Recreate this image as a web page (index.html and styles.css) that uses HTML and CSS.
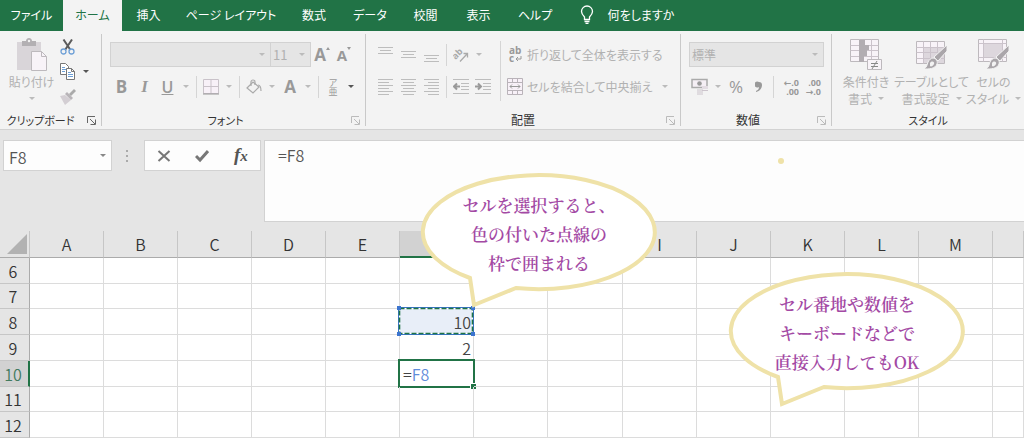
FILE: index.html
```html
<!DOCTYPE html>
<html lang="ja">
<head>
<meta charset="utf-8">
<meta name="viewport" content="width=device-width, initial-scale=1">
<title>F8</title>
<link rel="stylesheet" href="styles.css">
</head>
<body>
<div class="workbook">
  <nav class="tabs">
    <button class="tab">ファイル</button>
    <button class="tab tab-active">ホーム</button>
    <button class="tab">挿入</button>
    <button class="tab">ページ レイアウト</button>
    <button class="tab">数式</button>
    <button class="tab">データ</button>
    <button class="tab">校閲</button>
    <button class="tab">表示</button>
    <button class="tab">ヘルプ</button>
    <button class="tab tell-me">
      <svg width="14" height="20" viewBox="0 0 14 20" fill="none" stroke="#fff" stroke-width="1.3"><path d="M4.5 14.5V12C3 10.500 1.500 9 1.500 6.500a5.500 5.500 0 0 1 11 0C12.500 9 11 10.500 9.500 12v2.500zM4.500 16.500h5M5.500 18.300h3"/></svg>
      何をしますか
    </button>
  </nav>

  <div class="ribbon">
    <section class="group group-clipboard">
      <div class="group-body">
        <button class="big paste" disabled>
          <svg width="32" height="34" viewBox="0 0 32 34"><path d="M1 4h24v28H1z" fill="#d9d5d9"/><path d="M6 8V3h4c0-4 6-4 6 0h4v5z" fill="#b3b0b3"/><circle cx="13" cy="3" r="1.200" fill="#f3f3f3"/><path d="M15.500 13.500h10l5 5v14h-15z" fill="#f8f3f8" stroke="#bdb9bd"/><path d="M25.500 13.500v5h5" fill="none" stroke="#bdb9bd"/></svg>
          <span>貼り付け</span>
          <i class="caret"></i>
        </button>
        <div class="clip-tools">
          <button class="tool" aria-label="切り取り"><svg width="16" height="16" viewBox="0 0 16 16" fill="none"><path d="M3.500 0.500 10.500 11M12 0.500 5 11" stroke="#5b5b5b" stroke-width="2"/><circle cx="3.500" cy="12.500" r="2.500" stroke="#6d9fd6" stroke-width="1.300"/><circle cx="11.500" cy="12.500" r="2.500" stroke="#6d9fd6" stroke-width="1.300"/></svg></button>
          <button class="tool" aria-label="コピー"><svg width="16" height="17" viewBox="0 0 16 17" fill="#fff" stroke="#777"><path d="M.5.500h5l3 3v8h-8z"/><path d="M2 4.500h3M2 6.500h4M2 8.500h3" stroke="#6d9fd6"/><path d="M6.500 5.500h5l3 3v8h-8z"/><path d="M11.500 5.500v3h3" fill="none"/><path d="M8 9.500h3M8 11.500h5M8 13.500h5" stroke="#6d9fd6"/></svg><i class="caret caret-dark"></i></button>
          <button class="tool" disabled aria-label="書式のコピー/貼り付け"><svg width="16" height="16" viewBox="0 0 16 16"><path d="M0 7 5 6l6 5-6 5z" fill="#d3ced3"/><path d="m5 5 2-2 6 6-2 2z" fill="#b8b4b8"/><path d="m9 5 5-5 2 2-5 5z" fill="#aaa"/></svg></button>
        </div>
      </div>
      <footer class="group-label">クリップボード<svg class="launcher" width="10" height="9"><use href="#launch"/></svg></footer>
    </section>

    <section class="group group-font">
      <div class="group-rows">
        <div class="row">
          <label class="combo combo-font"><select disabled aria-label="フォント名"><option></option></select></label>
          <label class="combo combo-size"><select disabled aria-label="フォント サイズ"><option>11</option></select></label>
          <button class="tool w22" disabled aria-label="フォント サイズの拡大"><b class="glyph-a large">A</b><svg width="4" height="16" viewBox="0 0 4 16"><path d="M0 3 2 0l2 3z" fill="#999"/></svg></button>
          <button class="tool w22" disabled aria-label="フォント サイズの縮小"><b class="glyph-a">A</b><svg width="4" height="16" viewBox="0 0 4 16"><path d="M0 0h4L2 3z" fill="#999"/></svg></button>
        </div>
        <div class="row">
          <button class="tool letter w23" disabled><b>B</b></button>
          <button class="tool letter w23" disabled><em>I</em></button>
          <button class="tool letter w23" disabled><u>U</u></button>
          <i class="caret w14"></i><i class="rule"></i>
          <button class="tool w22" disabled aria-label="罫線"><svg width="16" height="16" viewBox="0 0 16 16" fill="#f8f1f8" stroke="#c9c2c9"><path d="M.5.500h15v14H.5z"/><path d="M8 .500v14M.5 7.500h15"/><path d="M0 15h16" stroke="#999"/></svg></button>
          <i class="caret w14"></i><i class="rule"></i>
          <button class="tool w22" disabled aria-label="塗りつぶしの色"><svg width="17" height="16" viewBox="0 0 17 16" fill="none" stroke="#aaa" stroke-width="1.200"><path d="m1 9 6-6 6 5-6 6z"/><path d="M5 7V3a2 2 0 0 1 4 0v3M12 6c3 0 3 3 3 6"/></svg></button>
          <i class="caret w14"></i>
          <button class="tool w22" disabled aria-label="フォントの色"><b class="glyph-a large">A</b></button>
          <i class="caret w14"></i><i class="rule"></i>
          <button class="tool w22 ruby" disabled><span>ア</span><span>亜</span></button>
          <i class="caret caret-dark w14"></i>
        </div>
      </div>
      <footer class="group-label">フォント<svg class="launcher dim" width="10" height="9"><use href="#launch"/></svg></footer>
    </section>

    <section class="group group-align">
      <div class="group-columns">
        <div class="group-rows">
          <div class="row">
            <button class="tool w23" disabled aria-label="上揃え"><svg class="lines" width="15" height="16"><path d="M0 .500h15M2 3.500h11M0 6.500h15"/></svg></button>
            <button class="tool w23" disabled aria-label="上下中央揃え"><svg class="lines" width="15" height="16"><path d="M0 4.500h15M2 7.500h11M0 10.500h15"/></svg></button>
            <button class="tool w23" disabled aria-label="下揃え"><svg class="lines" width="15" height="16"><path d="M0 8.500h15M2 11.500h11M0 14.500h15"/></svg></button>
            <i class="rule"></i>
            <button class="tool w22" disabled aria-label="方向"><svg width="16" height="16" viewBox="0 0 16 16"><g transform="rotate(-45 6 8)"><text class="orient" x="0" y="9">ab</text></g><path d="M7 14.500 14 7M10.500 6.500H14.500v4" stroke="#aaa" stroke-width="1.300" fill="none"/></svg></button>
            <i class="caret w14"></i>
          </div>
          <div class="row">
            <button class="tool w23" disabled aria-label="左揃え"><svg class="lines" width="15" height="16"><path d="M0 .500h15M0 3.500h11M0 6.500h15M0 9.500h11M0 12.500h15M0 15.500h11"/></svg></button>
            <button class="tool w23" disabled aria-label="中央揃え"><svg class="lines" width="15" height="16"><path d="M0 .500h15M2 3.500h11M0 6.500h15M2 9.500h11M0 12.500h15M2 15.500h11"/></svg></button>
            <button class="tool w23" disabled aria-label="右揃え"><svg class="lines" width="15" height="16"><path d="M0 .500h15M4 3.500h11M0 6.500h15M4 9.500h11M0 12.500h15M4 15.500h11"/></svg></button>
            <i class="rule"></i>
            <button class="tool w22" disabled aria-label="インデントを減らす"><svg class="lines" width="16" height="16"><path d="M0 .500h16M8 4.500h8M8 7.500h8M8 10.500h8M0 14.500h16"/><path d="M7 7.500H1.500M4 4.500 1 7.500l3 3" stroke="#999" stroke-width="2"/></svg></button>
            <button class="tool w22" disabled aria-label="インデントを増やす"><svg class="lines" width="16" height="16"><path d="M0 .500h16M8 4.500h8M8 7.500h8M8 10.500h8M0 14.500h16"/><path d="M0 7.500h5.500M3 4.500l3 3-3 3" stroke="#999" stroke-width="2"/></svg></button>
          </div>
        </div>
        <i class="rule rule-tall"></i>
        <div class="group-rows">
          <div class="row">
            <button class="tool labelled" disabled><svg width="16" height="20" viewBox="0 0 16 20"><text class="wrap-ab" x="2" y="9">ab</text><text class="wrap-ab" x="2" y="17">c</text><path d="M14 11v3H9M11 12l-2 2 2 2" stroke="#999" fill="none"/></svg>折り返して全体を表示する</button>
          </div>
          <div class="row">
            <button class="tool labelled" disabled><svg width="16" height="17" viewBox="0 0 16 17" fill="#f8f1f8" stroke="#b9b3b9"><path d="M.5.500h15v16H.5zM.5 4.500h15M.5 12.500h15M5.500.500v4M10.500.500v4M5.500 12.500v4M10.500 12.500v4"/><path d="M3 8.500h10M5 6.500l-2 2 2 2M11 6.500l2 2-2 2" stroke="#999" fill="none"/></svg>セルを結合して中央揃え<i class="caret"></i></button>
          </div>
        </div>
      </div>
      <footer class="group-label">配置<svg class="launcher dim" width="10" height="9"><use href="#launch"/></svg></footer>
    </section>

    <section class="group group-number">
      <div class="group-rows">
        <div class="row">
          <label class="combo combo-format"><select disabled aria-label="数値の書式"><option>標準</option></select></label>
        </div>
        <div class="row">
          <button class="tool w22" disabled aria-label="通貨表示形式"><svg width="18" height="17" viewBox="0 0 18 17"><path d="M1 1.500h15v8H1z" fill="#f5eff5" stroke="#aaa" stroke-width="1.500"/><circle cx="8.500" cy="5.500" r="2.300" fill="#999"/><path d="M11 8h6v3h-6z" fill="#e3dce3"/><path d="M6 12h6M11 12.500h6M6 14h6M6 16h6" stroke="#ccc4cc"/></svg></button>
          <i class="caret w14"></i>
          <button class="tool percent w22" disabled>%</button>
          <button class="tool w23" disabled aria-label="桁区切りスタイル"><svg width="8" height="12" viewBox="0 0 8 12"><path d="M4 1a3 3 0 1 0 0 5c0 2-1 3-3 4v1c4-1 6-4 6-7 0-2-1-3-3-3z" fill="#999"/></svg></button>
          <i class="rule"></i>
          <button class="tool decimals w22" disabled><span>←.0</span><span>.00</span></button>
          <button class="tool decimals w22" disabled><span>.00</span><span>→.0</span></button>
        </div>
      </div>
      <footer class="group-label">数値<svg class="launcher dim" width="10" height="9"><use href="#launch"/></svg></footer>
    </section>

    <section class="group group-style">
      <div class="group-body">
        <button class="big" disabled>
          <svg width="32" height="34" viewBox="0 0 32 34"><path d="M.5 1.500h28v22H.5z" fill="#f8f3f8" stroke="#bdb9bd"/><path d="M.5 7.500h28M.5 12.500h28M.5 18.500h28M9.500 1.500v22M21.500 1.500v22" stroke="#cbc3cb" fill="none"/><path d="M9 2h6v5H9zM9 7h10v5H9zM9 12h8v6H9zM9 18h5v6H9z" fill="#b2adb2"/><path d="M17.500 21.500h14v10h-14z" fill="#f8f3f8" stroke="#bdb9bd"/><path d="M21 25.500h7M21 28.500h7M27 23l-5 8" stroke="#888"/></svg>
          <span>条件付き</span><span class="with-caret">書式<i class="caret"></i></span>
        </button>
        <button class="big" disabled>
          <svg width="32" height="34" viewBox="0 0 32 34"><path d="M.5 3.500h28v22H.5z" fill="#f8f3f8" stroke="#bdb9bd"/><path d="M8 9h20v16H8z" fill="#ddd7dd"/><path d="M.5 9.500h28M.5 14.500h28M.5 20.500h28M7.500 3.500v22M14.500 3.500v22M21.500 3.500v22" stroke="#cbc3cb" fill="none"/><use href="#brush"/></svg>
          <span>テーブルとして</span><span class="with-caret">書式設定<i class="caret"></i></span>
        </button>
        <button class="big" disabled>
          <svg width="32" height="34" viewBox="0 0 32 34"><path d="M.5 1.500h28v22H.5z" fill="#f8f3f8" stroke="#bdb9bd"/><path d="M5 6h19v13H5z" fill="#ddd7dd"/><path d="M.5 5.500h28M.5 19.500h28M5.500 1.500v22M24.500 1.500v22" stroke="#cbc3cb" fill="none"/><use href="#brush"/></svg>
          <span>セルの</span><span class="with-caret">スタイル<i class="caret"></i></span>
        </button>
      </div>
      <footer class="group-label">スタイル</footer>
    </section>
  </div>

  <div class="formula-bar">
    <div class="name-box combo"><input type="text" value="F8" aria-label="名前ボックス"></div>
    <svg class="grip" width="4" height="14" viewBox="0 0 4 14" fill="#aaa"><path d="M1 1h2v2H1zM1 6h2v2H1zM1 11h2v2H1z"/></svg>
    <div class="entry-tools">
      <button aria-label="キャンセル"><svg width="14" height="14" viewBox="0 0 14 14"><path d="m1.500 2 11 10M12.500 2l-11 10" stroke="#777" stroke-width="2"/></svg></button>
      <button aria-label="入力"><svg width="14" height="14" viewBox="0 0 14 14"><path d="m1 7 4 4 8-9" fill="none" stroke="#777" stroke-width="3"/></svg></button>
      <button class="fx"><em>f<small>x</small></em></button>
    </div>
    <textarea class="formula" aria-label="数式バー">=F8</textarea>
  </div>

  <table class="sheet">
    <colgroup><col class="c-head"><col class="c"><col class="c"><col class="c"><col class="c"><col class="c"><col class="c"><col class="c"><col class="c-wide"><col class="c"><col class="c"><col class="c"><col class="c"><col class="c"><col></colgroup>
    <thead>
      <tr><th class="corner"><svg width="20" height="20" viewBox="0 0 20 20"><path d="M20 0v20H0z" fill="#b2b2b2"/></svg></th><th>A</th><th>B</th><th>C</th><th>D</th><th>E</th><th class="current"></th><th></th><th></th><th>I</th><th>J</th><th>K</th><th>L</th><th>M</th><th></th></tr>
    </thead>
    <tbody>
      <tr><th>6</th><td></td><td></td><td></td><td></td><td></td><td></td><td></td><td></td><td></td><td></td><td></td><td></td><td></td><td></td></tr>
      <tr class="short"><th>7</th><td></td><td></td><td></td><td></td><td></td><td></td><td></td><td></td><td></td><td></td><td></td><td></td><td></td><td></td></tr>
      <tr><th>8</th><td></td><td></td><td></td><td></td><td></td><td class="picked">10<svg class="marquee" width="78" height="30" viewBox="0 0 78 30"><path d="M2 2h74v26H2z" fill="none" stroke="#3b74cf" stroke-width="2"/><path d="M2.500 2.500h73v25h-73z" fill="none" stroke="#fff"/><path d="M2.500 2.500h73v25h-73z" fill="none" stroke="#1f7346" stroke-width="1.600" stroke-dasharray="5 2"/><path d="M0 0h4v4H0zM74 0h4v4h-4zM0 26h4v4H0zM74 26h4v4h-4z" fill="#3b74cf"/></svg></td><td></td><td></td><td></td><td></td><td></td><td></td><td></td><td></td></tr>
      <tr><th>9</th><td></td><td></td><td></td><td></td><td></td><td>2</td><td></td><td></td><td></td><td></td><td></td><td></td><td></td><td></td></tr>
      <tr><th class="current">10</th><td></td><td></td><td></td><td></td><td></td><td class="editing">=<span class="ref">F8</span></td><td></td><td></td><td></td><td></td><td></td><td></td><td></td><td></td></tr>
      <tr class="short"><th>11</th><td></td><td></td><td></td><td></td><td></td><td></td><td></td><td></td><td></td><td></td><td></td><td></td><td></td><td></td></tr>
      <tr><th>12</th><td></td><td></td><td></td><td></td><td></td><td></td><td></td><td></td><td></td><td></td><td></td><td></td><td></td><td></td></tr>
    </tbody>
  </table>

  <aside class="bubble bubble-select">
    <svg class="bubble-shape" width="238" height="138"><use href="#balloon"/></svg>
    <p>セルを選択すると、<br>色の付いた点線の<br>枠で囲まれる</p>
  </aside>
  <aside class="bubble bubble-type">
    <svg class="bubble-shape" width="238" height="138"><use href="#balloon"/></svg>
    <p>セル番地や数値を<br>キーボードなどで<br>直接入力してもOK</p>
  </aside>
  <span class="dot"></span>
</div>

<svg class="defs" width="0" height="0">
  <defs>
    <g id="launch" fill="none" stroke="currentColor"><path d="M.5 7V.500H8M3 3l5 5M8.500 3.500v5h-5"/></g>
    <g id="brush"><path d="M31 7v6l-9 10-4-4z" fill="#aaa6aa" stroke="#f3f3f3"/><path d="M17 20c3 0 5 3 4 6-2 5-8 5-13 5 3-2 3-4 4-7 1-2 3-4 5-4z" fill="#aaa6aa" stroke="#f3f3f3"/><path d="M14 25c2-3 5-1 4 1s-3 3-4 2z" fill="#f3f3f3"/></g>
    <path id="balloon" d="M50 106A116 57 0 1 1 96 116L54 133Z" fill="#fff" stroke="#efe2a8" stroke-width="4"/>
  </defs>
</svg>
</body>
</html>
```

FILE: styles.css
```css
* { box-sizing: border-box; }

body {
  margin: 0;
  overflow-x: hidden;
  background: #e5e5e5;
  color: #444;
  font: 12px/17px "Noto Sans CJK JP", sans-serif;
  font-feature-settings: "palt";
}

button, input, select, textarea {
  margin: 0;
  padding: 0;
  border: 0;
  border-radius: 0;
  background: none;
  color: inherit;
  font: inherit;
  font-feature-settings: inherit;
}

svg { display: block; flex: none; }
.defs { position: absolute; }

.workbook { position: relative; overflow: hidden; }

/* Tabs */
.tabs {
  display: grid;
  grid-template-columns: 63px 59px 53px 112px 54px 58px 53px 53px 60px 124px;
  height: 31px;
  background: #217346;
  color: #fff;
}
.tab { white-space: nowrap; padding-bottom: 2px; }
.tab-active { background: #f3f3f3; color: #217346; }
.tell-me { display: flex; align-items: center; justify-content: center; gap: 14px; }

/* Ribbon */
.ribbon {
  display: flex;
  height: 99px;
  padding-top: 3px;
  border-bottom: 1px solid #d2d2d2;
  background: #f3f3f3;
}
.group {
  display: flex;
  flex-direction: column;
  flex: none;
  height: 92px;
  border-right: 1px solid #c9c9c9;
  color: #b1b1b1;
}
.group-clipboard { width: 102px; }
.group-font { width: 264px; padding-left: 8px; }
.group-align { width: 315px; padding-left: 8px; }
.group-number { width: 151px; padding-left: 8px; }
.group-style { width: 192px; border-right: 0; }

.group-body, .group-columns { display: flex; flex: 1; }
.group-rows { display: flex; flex-direction: column; flex: 1; gap: 7px; padding-top: 8px; }
.group-columns .group-rows { flex: none; }
.row { display: flex; align-items: center; height: 25px; }

.group-label {
  position: relative;
  height: 16px;
  margin-left: -8px;
  color: #333;
  font-size: 12px;
  line-height: 20px;
  text-align: center;
}
.group-clipboard .group-label { margin: 0 20px 0 0; font-size: 11px; }
.group-style .group-label { margin: 0; font-size: 11px; }
.group-font .group-label { margin-right: 16px; font-size: 11px; }
.group-number .group-label { margin-right: 16px; }
.launcher { position: absolute; right: 4px; top: 6px; color: #666; }
.group-clipboard .launcher { right: -16px; }
.group-font .launcher, .group-number .launcher { right: -12px; }
.group .dim { color: #bbb; }

.tool { display: flex; align-items: center; justify-content: center; }
.w14 { width: 14px; }
.w22 { width: 22px; }
.w23 { width: 23px; }

.caret { display: flex; justify-content: center; flex: none; color: #bbb; }
.caret::before {
  content: "";
  border: 3px solid transparent;
  border-top-color: currentColor;
  border-bottom: 0;
}
.caret-dark { color: #555; }

.rule { flex: none; width: 1px; height: 22px; margin: 0 3px; background: #d5d5d5; }
.rule-tall { height: 60px; margin: 7px 6px 0 6px; }

.big { display: flex; flex-direction: column; align-items: center; white-space: nowrap; padding-top: 4px; }
.big span { line-height: 17px; }
.big svg { margin-bottom: 1px; }
.paste { width: 45px; margin-left: 9px; }
.paste .caret { margin-top: 7px; }
.clip-tools { display: flex; flex-direction: column; padding: 0 0 0 6px; }
.clip-tools .tool { justify-content: flex-start; gap: 7px; height: 25px; }
.with-caret { display: flex; align-items: center; gap: 6px; }

.group-style .group-body { display: grid; grid-template-columns: 68px 63px 61px; justify-items: center; }

.combo { position: relative; display: block; height: 25px; border: 1px solid #d2d2d2; background: #e5e5e5; }
.combo::after {
  content: "";
  position: absolute;
  top: 10px;
  right: 5px;
  border: 3px solid transparent;
  border-top-color: #bbb;
  border-bottom: 0;
}
.combo select { width: 100%; height: 100%; padding-left: 2px; appearance: none; opacity: 1; color: #b1b1b1; }
.combo-font { width: 161px; }
.combo-size { width: 41px; margin-left: -1px; font-size: 13px; }
.combo-format { width: 135px; }

.glyph-a { color: #999; font: bold 15px/20px "Open Sans", sans-serif; }
.glyph-a.large { font-size: 17px; }
.letter { color: #999; font: 17px/22px "Open Sans", sans-serif; }
.letter em { font: italic bold 17px/22px "Liberation Serif", serif; }
.letter u { font-weight: 600; font-size: 16px; }
.ruby { flex-direction: column; color: #999; font-size: 9px; line-height: 9px; }
.lines { fill: none; stroke: #bdbdbd; }
.orient { fill: #aaa; font: bold 9px "Open Sans", sans-serif; }
.wrap-ab { fill: #999; font: bold 10px "Open Sans", sans-serif; }
.labelled { gap: 4px; white-space: nowrap; }
.labelled .caret { margin-left: 6px; }
.percent { color: #999; font: 17px/22px "Open Sans", sans-serif; }
.decimals { flex-direction: column; align-items: flex-end; color: #999; font: bold 9px/9px "Open Sans", "DejaVu Sans", sans-serif; }

/* Formula bar */
.formula-bar { display: flex; align-items: flex-start; padding: 10px 0 9px 3px; color: #555; font-size: 16px; font-weight: 350; }
.name-box { width: 109px; height: 31px; background: #fdfdfd; }
.name-box::after { top: 13px; border-top-color: #888; }
.name-box input { width: 90px; height: 29px; padding: 3px 0 0 5px; }
.grip { margin: 9px 15px 0 13px; }
.entry-tools { display: flex; width: 117px; height: 31px; border: 1px solid #d2d2d2; background: #fdfdfd; }
.entry-tools button { display: flex; flex: 1; align-items: center; justify-content: center; }
.entry-tools .fx { font: bold 19px/20px "Liberation Serif", serif; }
.fx small { font-size: 15px; }
.formula {
  flex: 1;
  height: 82px;
  margin-left: 3px;
  padding: 2px 13px;
  border: 1px solid #d2d2d2;
  border-right: 0;
  background: #fdfdfd;
  line-height: 24px;
  resize: none;
  outline: 0;
}

/* Sheet */
.sheet { width: 100%; table-layout: fixed; border-collapse: separate; border-spacing: 0; background: #fff; font-size: 16px; font-weight: 350; }
.c-head { width: 30px; }
.c { width: 74px; }
.c-wide { width: 75px; }
.sheet th, .sheet td { height: 26px; padding: 0; border: 0 solid #dcdcdc; border-width: 0 1px 1px 0; }
.sheet .short th, .sheet .short td { height: 25px; }
.sheet td { position: relative; padding-right: 2px; line-height: 20px; text-align: right; }
.sheet th { background: #e5e5e5; font-weight: 350; border-color: #c6c6c6; line-height: 20px; }
.sheet thead th { height: 27px; border-bottom-color: #ababab; color: #333; }
.sheet tbody th { border-right-color: #ababab; padding-right: 3px; color: #333; }
.sheet .corner svg { margin: 0 2px 0 auto; }
.sheet thead .current { background: #d2d2d2; border-bottom: 2px solid #217346; }
.sheet tbody .current { background: #d2d2d2; border-right: 2px solid #217346; color: #417a5e; padding-right: 2px; }
.sheet .picked { background: #e8eef8; }
.marquee { position: absolute; left: -3px; top: -3px; z-index: 1; }
.sheet .editing { padding-left: 3px; text-align: left; }
.editing::before { content: ""; position: absolute; inset: -2px; border: 2px solid #217346; }
.editing::after { content: ""; position: absolute; right: -3px; bottom: -3px; width: 5px; height: 5px; border: 1px solid #fff; border-width: 1px 0 0 1px; background: #217346; }
.ref { color: #5f8cda; }

/* Callouts floating over the sheet */
.bubble { position: absolute; z-index: 2; width: 238px; }
.bubble-select { left: 420px; top: 172px; }
.bubble-type { left: 728px; top: 271px; }
.bubble-shape { position: absolute; left: 0; top: 0; }
.bubble p {
  position: relative;
  margin: 0;
  padding-top: 18px;
  color: #a349a4;
  font: 600 17px/29px "Noto Serif CJK JP", "Noto Sans CJK JP", serif;
  font-feature-settings: normal;
  text-align: center;
  white-space: nowrap;
}
.dot { position: absolute; left: 778px; top: 158px; width: 6px; height: 6px; border-radius: 50%; background: #efe2a8; }
```
